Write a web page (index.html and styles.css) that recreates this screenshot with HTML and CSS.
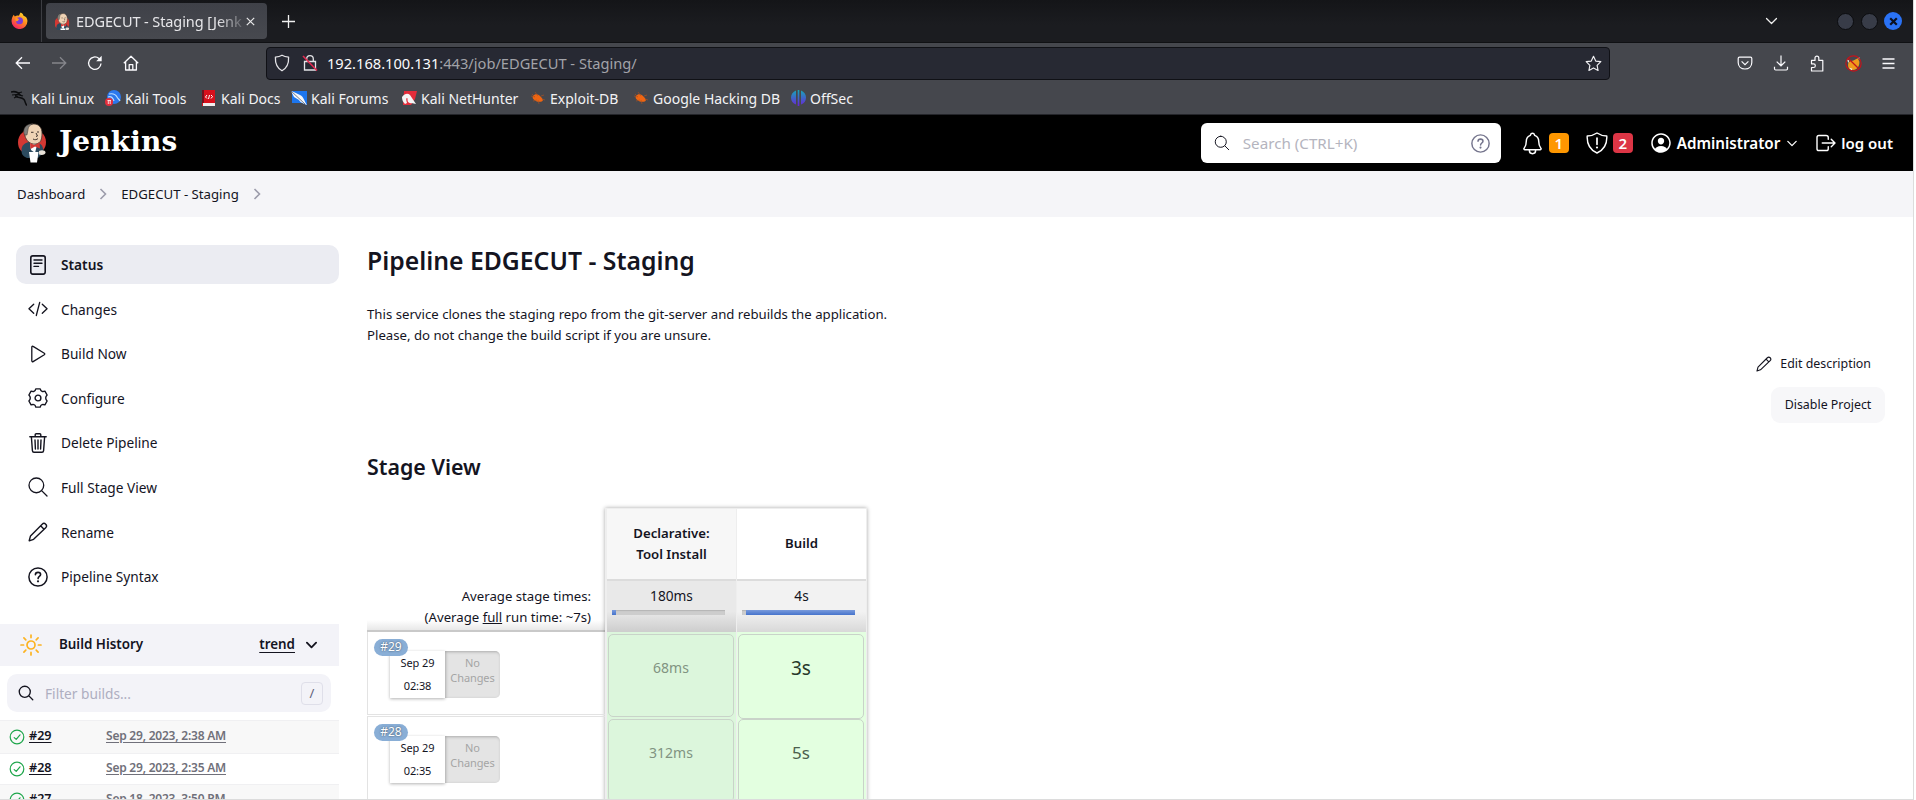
FILE: index.html
```
<!DOCTYPE html>
<html lang="en">
<head>
<meta charset="utf-8">
<title>EDGECUT - Staging [Jenkins]</title>
<link rel="stylesheet" href="styles.css">
</head>
<body>
<svg class="sprite" width="0" height="0">
  <defs>
    <linearGradient id="fox" x1="0.8" y1="0" x2="0.2" y2="1"><stop offset="0" stop-color="#ffe02f"/><stop offset="0.45" stop-color="#ff8a1e"/><stop offset="1" stop-color="#f5156c"/></linearGradient>
    <linearGradient id="offsec" gradientUnits="userSpaceOnUse" x1="0" y1="0" x2="0" y2="16"><stop offset="0" stop-color="#14a8b8"/><stop offset="1" stop-color="#6a22d8"/></linearGradient>
  </defs>
  <symbol id="search" viewBox="0 0 512 512"><path d="M221.09 64a157.09 157.09 0 10157.09 157.09A157.1 157.1 0 00221.09 64zM338.29 338.29L448 448" fill="none" stroke="currentColor" stroke-miterlimit="10" stroke-linecap="round"/></symbol>
  <symbol id="chev-right" viewBox="0 0 8 12"><path d="M1.5 1l5 5-5 5" fill="none" stroke="currentColor" stroke-width="1.6"/></symbol>
  <symbol id="chev-down" viewBox="0 0 12 8"><path d="M1 1.5l5 5 5-5" fill="none" stroke="currentColor" stroke-linecap="round" stroke-linejoin="round"/></symbol>
  <symbol id="pencil" viewBox="0 0 20 20"><path d="M1.2 18.8l1.3-4.900L14.200 2.200a2.400 2.400 0 013.500 3.500L5.600 17.300zM12.600 3.800l3.400 3.500" fill="none" stroke="currentColor" stroke-linejoin="round"/></symbol>
  <symbol id="help" viewBox="0 0 20 20"><circle cx="10" cy="10" r="9.1" fill="none" stroke="currentColor" stroke-width="1.5"/><path d="M7.4 7.7C7.4 6.2 8.5 5.4 10 5.4s2.6.8 2.6 2.2c0 1.9-2.5 1.9-2.5 4" fill="none" stroke="currentColor" stroke-width="1.6" stroke-linecap="round"/><circle cx="10" cy="14.3" r="1.1" fill="currentColor"/></symbol>
  <symbol id="ok" viewBox="0 0 16 16"><circle cx="8" cy="8" r="6.8" fill="none" stroke="#1ea64b" stroke-width="1.2"/><path d="M5.2 8.6l2 1.8 3.8-4.6" fill="none" stroke="#1ea64b" stroke-width="1.2" stroke-linecap="round" stroke-linejoin="round"/></symbol>
  <symbol id="butler" viewBox="0 0 28 40">
    <path d="M0 19C0 12 6 6 14 6s14 6 14 13-4 12-14 12S0 27 0 19z" fill="#d33833"/>
    <path d="M4 31c-2-8 2-11 7-12l9 1c4 1 6 5 5 10l-5 5H9c-2-1-4-2-5-4z" fill="#2c4a5e"/>
    <path d="M12 20l7 2-2 8-4-3z" fill="#fff"/>
    <path d="M7 8c0-5 5-7 9-7 5 0 8 4 8 9 0 6-1 10-6 11-6 1-10-4-11-8z" fill="#efd3b5" stroke="#40352f" stroke-width=".8"/>
    <path d="M6.500 12C4 6 8 .500 15 .800c-3 1.200-5 3-5 6L9 12z" fill="#81807c" stroke="#40352f" stroke-width=".5"/>
    <path d="M13 9.300h2.500M19 9h2M18 10l1.500 3-1.500.5M15 16c2 1.200 3.800.7 5-.5" stroke="#40352f" stroke-width="1" fill="none"/>
    <path d="M12 20l4.500 2 5-2.500.5 6-5-2-4.500 2.500z" fill="#d33833"/>
    <path d="M11 29h9.500l-1.500 10.500h-6.500z" fill="#fff"/><path d="M21 28c3-1.500 6.500-.5 6.500 1.500s-3 3-6.500 2z" fill="#e8e1d8"/>
  </symbol>
  <symbol id="bug" viewBox="0 0 16 16"><path d="M3 6c2-3 6-2 8 1 1.500 2 2.500 3 1.500 4-2 1.500-6 1-8-1C3 9 2 7.500 3 6z" fill="#ee6512"/><path d="M1 6l4 1M5 2l3 4M3 11l4-1M9 14l-1-4M11 6l3-1M12 9l3 1M2 4l3 3" stroke="#b3521c" stroke-width=".6"/></symbol>
</svg>

<div class="window">
  <div class="tabstrip">
    <div class="pinned"><svg width="17" height="17" viewBox="0 0 16 16"><path d="M9 .5c2 1 2.500 2 2.800 3C14 4 15.500 6 15.500 8.500A7.500 7.500 0 01.5 8.600C.5 6 1.500 4 2.600 2.600l1 1.700C5 3 6.500 3 7.500 3.500 8 2.500 8.300 1.500 9 .5z" fill="url(#fox)"/><circle cx="8" cy="8.300" r="3.300" fill="#7b3bd6"/><path d="M4 6c2-1 3 0 3.500 1.200C6.500 8 6 9 4.500 8.500z" fill="#ff9a1e"/></svg></div>
    <div class="tab">
      <svg width="15" height="17" viewBox="2 0 26 32"><use href="#butler" width="28" height="40"/></svg>
      <span class="tab-title">EDGECUT - Staging [Jenk</span>
      <svg class="close" width="9" height="9" viewBox="0 0 9 9"><path d="M.8.8l7.400 7.400M8.200.8L.8 8.200" stroke="#e9e9ea" stroke-width="1.200"/></svg>
    </div>
    <svg class="newtab" width="13" height="13" viewBox="0 0 13 13"><path d="M6.500 0v13M0 6.500h13" stroke="#f0f0f0" stroke-width="1.300"/></svg>
    <svg class="alltabs" width="13" height="8" viewBox="0 0 12 8" stroke-width="1.300"><use href="#chev-down"/></svg>
    <div class="winbtn"></div><div class="winbtn"></div>
    <div class="winbtn winclose"><svg width="9" height="9" viewBox="0 0 9 9"><path d="M1.200 1.200l6.600 6.600M7.800 1.200L1.200 7.800" stroke="#0b1020" stroke-width="2.200"/></svg></div>
  </div>

  <div class="navbar">
    <div class="navicons">
      <svg width="16" height="16" viewBox="0 0 16 16"><path d="M15 8H1.500M7 2.200L1.200 8 7 13.800" fill="none" stroke="#fbfbfe" stroke-width="1.300"/></svg>
      <svg width="16" height="16" viewBox="0 0 16 16"><path d="M1 8h13.500M9 2.200L14.800 8 9 13.800" fill="none" stroke="#85868b" stroke-width="1.300"/></svg>
      <svg width="16" height="16" viewBox="0 0 16 16"><path d="M14 8.500A6.200 6.200 0 1112 3.600l1.500 1.600" fill="none" stroke="#fbfbfe" stroke-width="1.300"/><path d="M14.700.8v5.500H9.200z" fill="#fbfbfe"/></svg>
      <svg width="16" height="16" viewBox="0 0 16 16"><path d="M.8 8.200L8 1.200l7.200 7M2.600 7v8h10.800V7M6.200 15V9.600h3.600V15" fill="none" stroke="#fbfbfe" stroke-width="1.300" stroke-linejoin="round"/></svg>
    </div>
    <div class="urlbar">
      <svg width="16" height="18" viewBox="0 0 16 18"><path d="M8 1.200c2 1.200 4 1.700 6.600 1.900.3 6-1.300 10.700-6.600 13.700C2.700 13.800 1.100 9.100 1.400 3.100 4 2.900 6 2.400 8 1.200z" fill="none" stroke="#e4e4e8" stroke-width="1.300" stroke-linejoin="round"/></svg>
      <svg width="16" height="18" viewBox="0 0 16 18"><path d="M2.500 7.500h11V16h-11zM4.700 7.500V5a3.300 3.300 0 016.600 0v2.500" fill="none" stroke="#e4e4e8" stroke-width="1.300"/><path d="M1 2l14 14.500" stroke="#e22850" stroke-width="1.600"/></svg>
      <span class="url"><b>192.168.100.131</b>:443/job/EDGECUT - Staging/</span>
      <svg class="star" width="17" height="17" viewBox="0 0 16 16"><path d="M8 1.200l2.100 4.500 4.800.6-3.500 3.400.9 4.900L8 12.200l-4.300 2.400.9-4.900L1.100 6.300l4.800-.6z" fill="none" stroke="#f0f0f3" stroke-width="1.100" stroke-linejoin="round"/></svg>
    </div>
    <div class="toolicons">
      <svg width="16" height="16" viewBox="0 0 16 16"><path d="M2.500 2.200h11c.8 0 1.300.5 1.300 1.300v4c0 4-3 6.500-6.800 6.500S1.200 11.500 1.200 7.500v-4c0-.8.5-1.300 1.300-1.300zM4.600 6.400L8 9.600l3.400-3.200" fill="none" stroke="#fbfbfe" stroke-width="1.200"/></svg>
      <svg width="16" height="16" viewBox="0 0 16 16"><path d="M8 .5v10M3.700 6.600L8 10.800l4.300-4.200M1.500 11.800v2c0 .7.500 1.200 1.200 1.200h10.600c.7 0 1.200-.5 1.200-1.200v-2" fill="none" stroke="#fbfbfe" stroke-width="1.200"/></svg>
      <svg width="16" height="17" viewBox="0 0 16 17"><path d="M2.500 5.400H6V3a1.900 1.900 0 013.800 0v2.400h4V16H2.500v-3.500h2a1.800 1.800 0 000-3.700h-2z" fill="none" stroke="#fbfbfe" stroke-width="1.200" stroke-linejoin="round"/></svg>
      <svg width="17" height="17" viewBox="0 0 16 16"><path d="M3 8c1-2 3-3 4.500-2.500L12 3l1.500 3c.5 4-2 8-6 8S2.500 11 3 8z" fill="#f09a1c"/><path d="M4 12l3 1-1 1.500z M12 2.500l1.500-.5.5 3z M2 4l2 1.500-1 2z" fill="#f5efe2"/><circle cx="8" cy="8" r="7.200" fill="none" stroke="#c4131b" stroke-width="1.100"/><path d="M3 3l10 10" stroke="#c4131b" stroke-width="1.200"/></svg>
      <svg width="13" height="13" viewBox="0 0 13 13"><path d="M.5 2h12M.5 6.500h12M.5 11h12" stroke="#fbfbfe" stroke-width="1.300"/></svg>
    </div>
  </div>

  <div class="bookmarks">
    <div class="bm" style="width:94px"><svg width="16" height="16" viewBox="0 0 16 16"><path d="M0 2c4-1 7 0 9 3-3-1-5 0-4 1.500 2 1.500 6 .5 8 3 1.500 2 1 4 3 6" fill="none" stroke="#0d0e10" stroke-width="1.500"/><path d="M1 5l5-.5M3 8l4-2M9 5l3 1M7 3l4-1" stroke="#0d0e10" stroke-width="1.100"/></svg><span>Kali Linux</span></div>
    <div class="bm" style="width:97px"><svg width="16" height="16" viewBox="0 0 16 16"><circle cx="9" cy="7" r="7" fill="#2b78ee"/><path d="M4 4c5-1 7 1 8 3s2 2 3 4M3 7c3-1 5 1 6 4" fill="none" stroke="#b9dcff" stroke-width="1.200"/><circle cx="4" cy="12" r="4" fill="#e32e3c"/><path d="M2.500 10.500h3.500M3.300 10.500v3.500M5.200 10.500v3.500" stroke="#fff" stroke-width=".8"/></svg><span>Kali Tools</span></div>
    <div class="bm docs" style="width:89px"><svg width="13" height="16" viewBox="0 0 13 16"><path d="M0 0h13v16H0z" fill="#d8101c"/><path d="M0 0h2v13H0z" fill="#75111c"/><path d="M1 13h12v3H1z" fill="#f1eded"/><path d="M5 5L3.500 7 5 8.500M9 5l1.500 1.500L9 8.500M7.500 5l-1 4" fill="none" stroke="#fff"/></svg><span>Kali Docs</span></div>
    <div class="bm" style="width:110px"><svg width="16" height="16" viewBox="0 0 16 16"><path d="M1 1h15v14L11 13H1z" fill="#1d76ee"/><path d="M0 1c4 1 6 3 9 4 4 2 4 6 7 10-5-2-7-3-8-5L3 7z" fill="#f5f7fa"/><path d="M0 1l14 13" stroke="#35445c" stroke-width=".7"/></svg><span>Kali Forums</span></div>
    <div class="bm" style="width:129px"><svg width="16" height="16" viewBox="0 0 16 16"><path d="M3 1h13l-2 8-4 6H2z" fill="#e32c3a"/><path d="M1 7c3-4 6-4 8-2l6 9c-3-1-6 0-8-2-1-2 0-4-1-4s-1 2 0 5l-2 1C2 12 1 10 1 7z" fill="#f5f5f5"/></svg><span>Kali NetHunter</span></div>
    <div class="bm" style="width:103px"><svg width="16" height="16"><use href="#bug"/></svg><span>Exploit-DB</span></div>
    <div class="bm" style="width:158px"><svg width="16" height="16"><use href="#bug"/></svg><span>Google Hacking DB</span></div>
    <div class="bm"><svg width="15" height="16" viewBox="0 0 15 16"><path d="M5 .500v14C2 13.500 0 11 0 7.500S2 2 5 .500zM6.700 0h1.600v16H6.700zM10 .500C13 2 15 4 15 7.500s-2 6-5 7z" fill="url(#offsec)"/></svg><span>OffSec</span></div>
  </div>

  <header class="jheader">
    <svg width="28" height="40"><use href="#butler"/></svg>
    <span class="brand">Jenkins</span>
    <div class="jsearch">
      <svg width="18" height="18" stroke-width="28"><use href="#search"/></svg>
      <span>Search (CTRL+K)</span>
      <svg class="jhelp" width="19" height="19"><use href="#help"/></svg>
    </div>
    <svg class="bell" width="25" height="25" viewBox="0 0 512 512"><path d="M427.680 351.430C402 320 383.870 304 383.870 217.350 383.870 138 343.350 109.730 310 96c-4.430-1.820-8.600-6-9.950-10.550C294.200 65.540 277.800 48 256 48s-38.210 17.550-44 37.470c-1.350 4.600-5.520 8.710-9.950 10.530-33.390 13.750-73.870 41.920-73.870 121.350C128.130 304 110 320 84.320 351.430 73.680 364.450 83 384 101.610 384h308.880c18.510 0 27.770-19.610 17.190-32.570zM320 384v16a64 64 0 01-128 0v-16" fill="none" stroke="#fff" stroke-width="30" stroke-linejoin="round"/></svg>
    <span class="count orange">1</span>
    <svg class="shield" width="22" height="22" viewBox="0 0 22 22"><path d="M11 1c3 2 6 2.900 9.800 3C21.200 12 19 17.500 11 21 3 17.500.8 12 1.200 4 5 3.900 8 3 11 1z" fill="none" stroke="#fff" stroke-width="1.400" stroke-linejoin="round"/><path d="M11 6v6.300" stroke="#fff" stroke-width="1.700" stroke-linecap="round"/><circle cx="11" cy="15.500" r="1.100" fill="#fff"/></svg>
    <span class="count red">2</span>
    <svg class="user" width="24" height="24" viewBox="0 0 512 512"><path fill="#fff" d="M258.900 48C141.920 46.420 46.420 141.920 48 258.900c1.560 112.190 92.910 203.540 205.100 205.100 117 1.600 212.480-93.900 210.880-210.880C462.440 140.910 371.090 49.560 258.900 48zm126.420 327.250a4 4 0 01-6.140-.32 124.270 124.270 0 00-32.350-29.590C321.370 329 289.110 320 256 320s-65.370 9-90.830 25.340a124.240 124.240 0 00-32.350 29.580 4 4 0 01-6.140.32A175.320 175.320 0 0180 259c-1.630-97.310 78.220-178.760 175.570-179S432 158.810 432 256a175.320 175.320 0 01-46.680 119.250zM256 144c-19.720 0-37.550 7.390-50.220 20.820s-19 32-17.570 51.930C191.110 256 221.520 288 256 288s64.830-32 67.790-71.240c1.480-19.740-4.800-38.140-17.680-51.820C293.390 151.440 275.590 144 256 144z"/></svg>
    <span class="jlink admin">Administrator</span>
    <svg class="userchev" width="10" height="7" stroke-width="1.500"><use href="#chev-down"/></svg>
    <svg class="logouticon" width="24" height="24" viewBox="0 0 512 512"><path d="M304 336v40a40 40 0 01-40 40H104a40 40 0 01-40-40V136a40 40 0 0140-40h152c22.090 0 48 17.910 48 40v40M368 336l80-80-80-80M176 256h256" fill="none" stroke="#fff" stroke-width="30" stroke-linecap="round" stroke-linejoin="round"/></svg>
    <span class="jlink logout">log out</span>
  </header>

  <nav class="crumbs">
    <span class="c1">Dashboard</span><svg width="8" height="12"><use href="#chev-right"/></svg>
    <span class="c2">EDGECUT - Staging</span><svg width="8" height="12"><use href="#chev-right"/></svg>
  </nav>

  <div class="page">
    <aside class="side">
      <div class="tasks">
        <div class="task active"><svg width="20" height="20" viewBox="0 0 20 20"><rect x="2.800" y=".9" width="14.400" height="18.200" rx="2" fill="none" stroke="#14141f" stroke-width="1.600"/><path d="M6 5h8M6 8.200h8M6 11.400h4.500" stroke="#14141f" stroke-width="1.400" stroke-linecap="round"/></svg><span class="t-status">Status</span></div>
        <div class="task"><svg width="21" height="20" viewBox="0 0 21 20"><path d="M6 5L1 9.800 6 14.500M15 5l5 4.800-5 4.700M12.300 3L8.700 16.800" fill="none" stroke="#14141f" stroke-width="1.400" stroke-linecap="round" stroke-linejoin="round"/></svg><span>Changes</span></div>
        <div class="task"><svg width="20" height="20" viewBox="0 0 20 20"><path d="M3.800 3.200v13.600c0 .8.700 1.200 1.300.8l11.200-6.800c.6-.4.600-1.200 0-1.600L5.100 2.400c-.6-.4-1.300 0-1.300.8z" fill="none" stroke="#14141f" stroke-width="1.300"/></svg><span>Build Now</span></div>
        <div class="task"><svg width="20" height="20" viewBox="0 0 20 20"><path d="M7.800.9h4.400q.5 2 1.800 2.400 1.200.5 2.900-.2l2.200 3.900Q17.700 8.400 17.700 10t1.400 3l-2.200 3.900q-1.700-.7-2.900-.2-1.300.4-1.800 2.400H7.800q-.5-2-1.800-2.400-1.200-.5-2.900.2L.9 13Q2.300 11.600 2.300 10T.9 7l2.200-3.900q1.700.7 2.900.2Q7.300 2.900 7.800.9z" fill="none" stroke="#14141f" stroke-width="1.400" stroke-linejoin="round"/><circle cx="10" cy="10" r="2.900" fill="none" stroke="#14141f" stroke-width="1.400"/></svg><span>Configure</span></div>
        <div class="task"><svg width="20" height="20" viewBox="0 0 20 20"><path d="M1.800 3.800h16.400M3.400 4l1 13.600c.1 1 .7 1.600 1.600 1.600h8c.9 0 1.500-.6 1.600-1.600L16.600 4M7.200 3.600V1.800c0-.6.400-1 1-1h3.600c.6 0 1 .4 1 1v1.800M7 7l.4 9M10 7v9M13 7l-.4 9" fill="none" stroke="#14141f" stroke-width="1.400" stroke-linecap="round" stroke-linejoin="round"/></svg><span>Delete Pipeline</span></div>
        <div class="task"><svg width="24" height="24" class="wide" stroke-width="28"><use href="#search"/></svg><span>Full Stage View</span></div>
        <div class="task"><svg width="20" height="20" stroke-width="1.400"><use href="#pencil"/></svg><span>Rename</span></div>
        <div class="task"><svg width="20" height="20"><use href="#help"/></svg><span>Pipeline Syntax</span></div>
      </div>
      <div class="histhead">
        <svg width="22" height="22" viewBox="0 0 22 22" fill="none" stroke="#fcb322" stroke-width="1.700" stroke-linecap="round"><circle cx="11" cy="11" r="4"/><path d="M11 1v2.600M11 18.400V21M1 11h2.600M18.400 11H21M3.900 3.900l1.900 1.900M16.200 16.200l1.900 1.900M3.900 18.100l1.900-1.900M16.200 5.800l1.900-1.900"/></svg>
        <span class="histtitle">Build History</span><a class="trend">trend</a>
        <svg class="histchev" width="11" height="8" stroke-width="2"><use href="#chev-down"/></svg>
      </div>
      <div class="filter"><svg width="18" height="18" stroke-width="38"><use href="#search"/></svg><span>Filter builds...</span><kbd>/</kbd></div>
      <div class="builds">
        <div class="build odd"><svg width="16" height="16"><use href="#ok"/></svg><a>#29</a><a class="when">Sep 29, 2023, 2:38 AM</a></div>
        <div class="build"><svg width="16" height="16"><use href="#ok"/></svg><a>#28</a><a class="when">Sep 29, 2023, 2:35 AM</a></div>
        <div class="build odd"><svg width="16" height="16"><use href="#ok"/></svg><a>#27</a><a class="when">Sep 18, 2023, 3:50 PM</a></div>
      </div>
    </aside>

    <main class="main">
      <h1><span>Pipeline EDGECUT - Staging</span></h1>
      <p class="desc"><span>This service clones the staging repo from the git-server and rebuilds the application.</span><br><span>Please, do not change the build script if you are unsure.</span></p>
      <div class="edit"><svg width="16" height="16" stroke-width="1.400"><use href="#pencil"/></svg><span>Edit description</span></div>
      <div class="disable"><span>Disable Project</span></div>
      <h2><span>Stage View</span></h2>
      <div class="stages">
        <div class="runs">
          <div class="avg"><span>Average stage times:</span><span>(Average <u>full</u> run time: ~7s)</span></div>
          <div class="run"><span class="badge">#29</span><div class="date"><span>Sep 29</span><span>02:38</span></div><div class="nochg">No<br>Changes</div></div>
          <div class="run"><span class="badge">#28</span><div class="date"><span>Sep 29</span><span>02:35</span></div><div class="nochg">No<br>Changes</div></div>
        </div>
        <div class="grid">
          <div class="col first">
            <div class="colhead">Declarative:<br>Tool Install</div>
            <div class="coltime"><span>180ms</span><div class="bar"><i class="fill" style="width:4px"></i></div></div>
            <div class="cell"><span>68ms</span></div>
            <div class="cell"><span>312ms</span></div>
          </div>
          <div class="col second">
            <div class="colhead">Build</div>
            <div class="coltime"><span>4s</span><div class="bar"><i class="fill" style="width:109px"></i></div></div>
            <div class="cell big"><span>3s</span></div>
            <div class="cell big soft"><span>5s</span></div>
          </div>
        </div>
      </div>
    </main>
  </div>
</div>
</body>
</html>
```

FILE: styles.css
```
* { box-sizing: border-box; }
html, body { margin: 0; height: 800px; overflow: hidden; background: #fff; }
body { font: 13.200px/21px "Noto Sans", sans-serif; color: #14141f; }
svg { flex: none; display: block; }
.sprite { position: absolute; }
.window { width: 1914px; height: 800px; display: flex; flex-direction: column; overflow: hidden; border-right: 1px solid #dcdcdc; border-bottom: 1px solid #dcdcdc; }

/* Browser chrome */
.tabstrip { flex: none; height: 43px; display: flex; align-items: center; background: linear-gradient(#141518, #1b1c20 60%); border-bottom: 1px solid #101114; color: #f0f0f0; white-space: nowrap; }
.pinned { width: 42px; height: 42px; padding: 12px 0 0 11px; border-right: 1px solid #3c3d42; }
.tab { width: 221px; height: 36px; margin-left: 4px; padding: 0 12px 0 9px; display: flex; align-items: center; border-radius: 4px; background: linear-gradient(#3f4148, #47494f); }
.tab-title { width: 168px; margin-left: 6px; font-size: 14.500px; color: #e6e6e9; letter-spacing: -0.1px; mask-image: linear-gradient(90deg, #000 142px, transparent 172px); }
.close { margin-left: auto; }
.newtab { margin-left: 15px; }
.alltabs { margin-left: auto; margin-right: 59px; }
.winbtn { width: 17px; height: 17px; margin-right: 7px; border-radius: 50%; background: #383c48; border: 1px solid #0b0c0f; }
.winclose { width: 18px; height: 18px; margin-right: 11px; margin-left: -1px; border: 0; background: #2a72f5; display: flex; align-items: center; justify-content: center; }
.navbar { flex: none; height: 40px; display: flex; align-items: center; background: #45474d; }
.navicons { width: 266px; padding-left: 15px; display: flex; gap: 20px; }
.urlbar { width: 1344px; height: 33px; padding: 0 7px 0 7px; display: flex; align-items: center; background: #272933; border: 1px solid #101116; border-radius: 4px; }
.urlbar svg + svg { margin-left: 12px; }
.url { margin-left: 9px; color: #a2a3a9; font-size: 14.650px; }
.url b { font-weight: 400; color: #fbfbfe; }
.star { margin-left: auto; }
.toolicons { flex: 1; padding: 0 18px 0 0; display: flex; gap: 20px; align-items: center; justify-content: flex-end; }
.bookmarks { flex: none; height: 32px; padding: 0 0 1px 11px; display: flex; align-items: center; background: #45474d; border-bottom: 1px solid #24252a; color: #f3f3f5; font-size: 14px; white-space: nowrap; }
.bm { display: flex; align-items: center; gap: 4px; }
.docs { gap: 6px; }

/* Application header */
.jheader { flex: none; height: 56px; padding: 0 20px 0 18px; display: flex; align-items: center; background: #000; color: #fff; white-space: nowrap; }
.brand { margin: -3px 0 0 13px; font: bold 28px/40px "DejaVu Serif", serif; letter-spacing: 0.1px; }
.jsearch { width: 300px; height: 40px; margin-left: auto; padding: 0 11px 0 12px; display: flex; align-items: center; border-radius: 6px; background: #fff; color: #14141f; }
.jsearch span { margin-left: 12px; font-size: 15.200px; color: #b4b4be; }
.jhelp { margin-left: auto; color: #74748c; }
.bell { margin-left: 19px; }
.count { width: 20px; height: 20px; border-radius: 4px; font-size: 15px; font-weight: 600; line-height: 20px; text-align: center; }
.orange { margin-left: 4px; background: #fe9700; }
.red { margin-left: 5px; background: #dc3545; }
.shield { margin-left: 17px; }
.user { margin-left: 16px; }
.jlink { font-size: 15.200px; font-weight: 600; }
.jlink.logout { font-size: 15px; }
.admin { margin-left: 4px; }
.userchev { margin-left: 7px; }
.logouticon { margin-left: 17px; }
.logout { margin-left: 3px; }

.crumbs { flex: none; height: 46px; padding-left: 17px; display: flex; align-items: center; background: #f5f5f8; white-space: nowrap; }
.crumbs svg { margin: 0 14px; color: #9c9cab; }

/* Sidebar */
.page { flex: 1; display: flex; min-height: 0; }
.side { width: 339px; flex: none; padding-top: 28px; }
.tasks { height: 379px; padding-left: 16px; display: flex; flex-direction: column; gap: 5.600px; }
.task { flex: none; height: 39px; padding-left: 12px; display: flex; align-items: center; gap: 13px; border-radius: 10px; font-size: 13.700px; }
.task svg { width: 20px; }
.task .wide { width: 24px; margin: 0 -2px; }
.task.active { background: #ebecf2; font-weight: 600; }
.histhead { height: 42px; padding: 0 18px 1px 20px; display: flex; align-items: center; background: #f3f3f8; font-size: 13.400px; font-weight: 600; }
.histtitle { margin-left: 17px; }
.trend { margin-left: auto; text-decoration: underline; text-underline-offset: 3px; }
.histchev { margin-left: 11px; margin-right: 4px; }
.filter { width: 324px; height: 38px; margin: 8px 0 8px 7px; padding: 0 8px 0 10px; display: flex; align-items: center; border-radius: 10px; background: #f3f3f8; }
.filter span { margin-left: 10px; color: #aeaec0; font-size: 13.700px; }
kbd { width: 22px; height: 23px; margin-left: auto; border: 1px solid #dfdfe9; border-radius: 4px; font: 13px/20px "Noto Sans", sans-serif; text-align: center; color: #60607a; }
.build { height: 31px; padding-left: 9px; display: flex; align-items: center; border-top: 1px solid #f0f0f2; font-size: 12.600px; font-weight: 600; white-space: nowrap; }
.build.odd { background: #f8f8f8; }
.build:first-child { height: 33px; }
.build a { width: 77px; margin-left: 4px; text-decoration: underline; text-underline-offset: 2px; margin-top: -4px; }
.build a.when { width: auto; margin-left: 0; color: #70707a; font-size: 12px; letter-spacing: -0.22px; }

/* Main column */
.main { flex: 1; min-width: 0; padding: 27px 28px 0 28px; display: flex; flex-direction: column; align-items: flex-start; white-space: nowrap; }
h1 { margin: 0; font-size: 24.750px; line-height: 34px; font-weight: 600; }
.desc { margin: 26px 0 0; line-height: 21px; }
.edit { align-self: flex-end; height: 21px; margin-top: 7px; padding-right: 14px; display: flex; align-items: center; gap: 8px; font-size: 12.400px; }
.disable { align-self: flex-end; width: 114px; height: 36px; margin-top: 13px; border-radius: 9px; background: #f7f7f9; font-size: 12.400px; line-height: 36px; text-align: center; }
h2 { margin: 29px 0 0; font-size: 21.400px; line-height: 30px; font-weight: 600; }
.stages { margin-top: 26px; display: flex; }
.runs { width: 238px; }
.avg { height: 124px; padding: 0 14px 2px 0; display: flex; flex-direction: column; justify-content: flex-end; align-items: flex-end; border-bottom: 2px solid #c9c9c9; background: linear-gradient(transparent 112px, #e8e8e8); }
.run { position: relative; height: 83px; margin-bottom: 2px; padding: 19px 0 0 22px; display: flex; align-items: flex-start; border: 1px solid #e3e3e3; border-top-width: 0; border-right: 0; }
.run + .run { border-top-width: 1px; height: 85px; margin-top: -1px; }
.badge { position: absolute; left: 6px; top: 7px; width: 34px; height: 17px; border-radius: 9px; background: #89aed6; color: #fff; font-size: 12px; line-height: 16px; text-align: center; text-shadow: 0 0 2px #345; }
.date { width: 55px; height: 47px; display: flex; flex-direction: column; background: #fff; box-shadow: 0 1px 3px rgba(0,0,0,.3); font-size: 11px; line-height: 23px; letter-spacing: -0.1px; text-align: center; }
.nochg { width: 55px; height: 47px; padding-top: 4px; border-radius: 0 5px 5px 0; background: #e4e4e4; box-shadow: inset 1px 1px 3px #aaa; color: #a4a4a4; font-size: 11px; line-height: 15px; letter-spacing: -0.1px; text-align: center; }
.grid { width: 262px; height: 320px; display: flex; gap: 1px; padding: 1px 1px 0 2px; background: #eeeeee; box-shadow: 0 0 4px rgba(0,0,0,.35); }
.col { width: 129px; text-align: center; background: #e3ffe0; }
.col.first { background: #dcf6dc; }
.colhead { height: 70px; padding-bottom: 1px; display: flex; align-items: center; justify-content: center; background: #fff; font-weight: 600; }
.first .colhead { background: #f7f7f7; }
.coltime { height: 53px; padding-top: 5px; border-top: 2px solid #dcdcdc; background: linear-gradient(#f2f2f2 60%, #d8d8d8); font-size: 13.700px; }
.first .coltime { background: linear-gradient(#e9e9e9 60%, #cdcdcd); }
.coltime span { display: block; line-height: 20px; }
.bar { width: 113px; height: 5px; margin: 4px 0 0 5px; display: flex; background: #cdcdcd; box-shadow: inset 0 1px 1px #b5b5b5; }
.fill { background: linear-gradient(#7a9bdc, #4573cc); }
.second .fill { margin-left: 4px; }
.cell { height: 83px; margin: 2px 2px 2px 1px; padding-top: 21px; border: 1px solid #c9d3c9; border-radius: 5px; color: #819381; font-size: 14px; line-height: 24px; }
.second .cell { height: 85px; margin-bottom: 0; }
.second .cell + .cell { margin-top: 0; }
.big { color: #26382a; font-size: 19px; }
.soft { color: #4b604d; font-size: 17px; }
```
